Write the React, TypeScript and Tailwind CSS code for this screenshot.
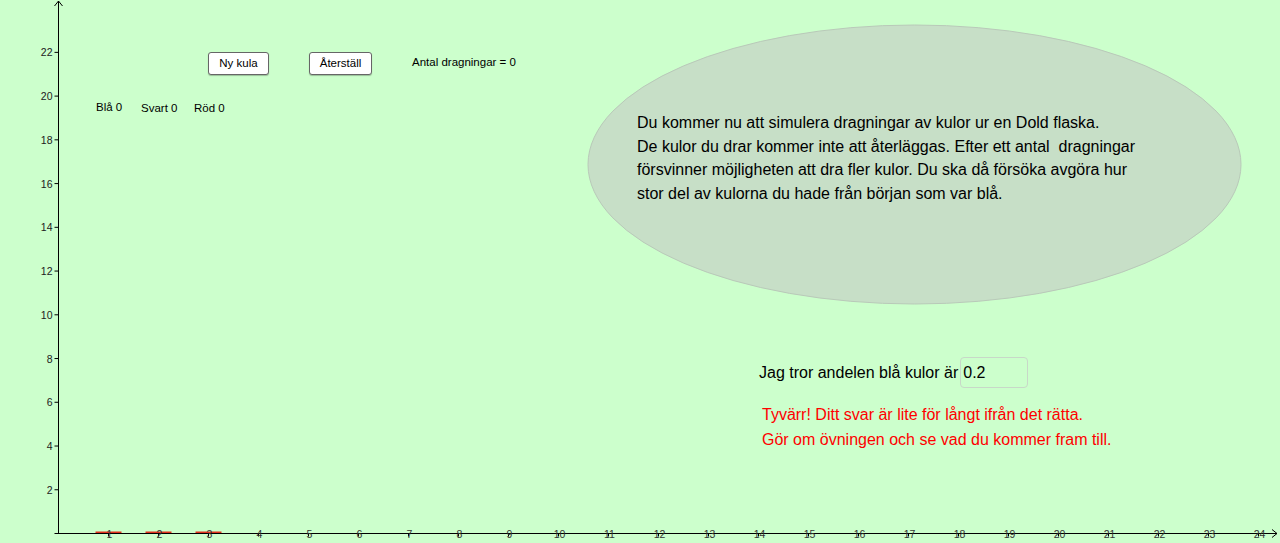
import React from 'react';

const X0 = 58.5;
const Y0 = 533.5;
const UX = 50;
const UY = 21.87;

function Axes() {
  const xs = Array.from({ length: 24 }, (_, i) => i + 1);
  const ys = Array.from({ length: 11 }, (_, i) => (i + 1) * 2);
  return (
    <svg className="absolute inset-0" width={1280} height={543} viewBox="0 0 1280 543">
      <ellipse cx={914.5} cy={164.5} rx={326.5} ry={139.5} fill="#c7dfc7" stroke="#b9c9b9" strokeWidth={1} />
      {/* red bars */}
      {[1, 2, 3].map((i) => (
        <line key={i} x1={X0 + UX * i - 13} x2={X0 + UX * i + 13} y1={532.5} y2={532.5} stroke="#e0321e" strokeWidth={2} />
      ))}
      <line x1={X0} y1={1} x2={X0} y2={Y0} stroke="#000" strokeWidth={1} />
      <line x1={X0 - 4} y1={Y0} x2={1277} y2={Y0} stroke="#000" strokeWidth={1} />
      <polyline points={`${X0 - 4},6 ${X0},1 ${X0 + 4},6`} fill="none" stroke="#000" strokeWidth={1} />
      <polyline points={`1272,${Y0 - 4} 1277,${Y0} 1272,${Y0 + 4}`} fill="none" stroke="#000" strokeWidth={1} />
      {ys.map((v) => (
        <g key={v}>
          <line x1={X0 - 4} x2={X0} y1={Y0 - v * UY} y2={Y0 - v * UY} stroke="#000" />
          <text x={X0 - 6} y={Y0 - v * UY + 4} textAnchor="end" fontSize={10.5} fill="#222" fontFamily="Liberation Sans, Arial, sans-serif">
            {v}
          </text>
        </g>
      ))}
      {xs.map((v) => (
        <g key={v}>
          <line x1={X0 + v * UX} x2={X0 + v * UX} y1={Y0} y2={Y0 + 3} stroke="#000" />
          <text x={X0 + v * UX + 1} y={Y0 + 4} textAnchor="middle" fontSize={10.5} fill="#333" fontFamily="Liberation Sans, Arial, sans-serif">
            {v}
          </text>
        </g>
      ))}
    </svg>
  );
}

function GgbButton({ label, w }: { label: string; w: string }) {
  return (
    <button className={`${w} h-[23px] rounded-[3px] border border-[#666] bg-white text-[11.5px] shadow-[0_1px_1px_rgba(0,0,0,0.25)]`}>
      {label}
    </button>
  );
}

export default function App() {
  return (
    <div className="relative w-[1280px] h-[543px] overflow-hidden bg-[#ccffcc] font-['Liberation_Sans',Arial,sans-serif] text-black">
      <Axes />

      {/* counters */}
      <div className="absolute left-[96px] top-[100px] flex text-[11.5px]">
        <span className="w-[45px] -mt-px">Blå 0</span>
        <span className="w-[53px]">Svart 0</span>
        <span>Röd 0</span>
      </div>

      {/* toolbar */}
      <div className="absolute left-[208px] top-[52px] flex items-center gap-[40px]">
        <GgbButton label="Ny kula" w="w-[61px]" />
        <GgbButton label="Återställ" w="w-[63px]" />
        <span className="text-[11.5px] -mt-px">Antal dragningar = 0</span>
      </div>

      {/* intro text inside ellipse */}
      <div className="absolute left-[637px] top-[111px] text-[16px] leading-[23.7px] whitespace-pre">
        <div>Du kommer nu att simulera dragningar av kulor ur en Dold flaska.</div>
        <div>De kulor du drar kommer inte att återläggas. Efter ett antal  dragningar</div>
        <div>försvinner möjligheten att dra fler kulor. Du ska då försöka avgöra hur</div>
        <div>stor del av kulorna du hade från början som var blå.</div>
      </div>

      {/* answer */}
      <div className="absolute left-[759px] top-[357px] flex flex-col gap-[14px]">
        <div className="flex items-center gap-[2px]">
          <span className="text-[16px]">Jag tror andelen blå kulor är</span>
          <div className="w-[68px] h-[31px] rounded-[4px] border border-[#c8d8c8] flex items-center pl-[2px] text-[16px]">0.2</div>
        </div>
        <div className="pl-[3px] text-[16px] leading-[25px] text-[#ff0000]">
          <div>Tyvärr! Ditt svar är lite för långt ifrån det rätta.</div>
          <div>Gör om övningen och se vad du kommer fram till.</div>
        </div>
      </div>
    </div>
  );
}
